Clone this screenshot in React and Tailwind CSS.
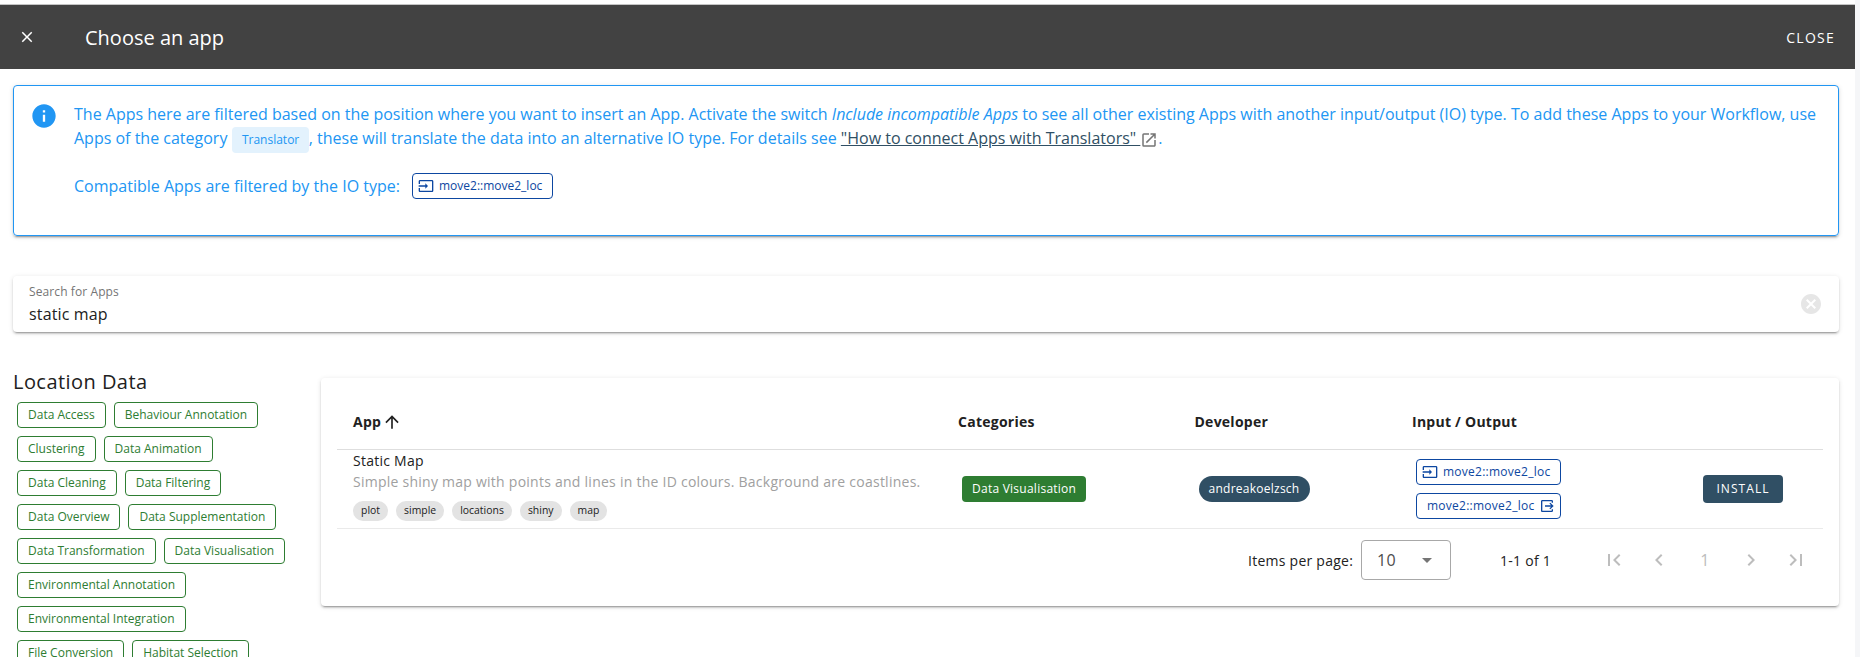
import { MdInfo, MdInput, MdOutput, MdOpenInNew, MdArrowUpward, MdClose, MdCancel, MdArrowDropDown, MdFirstPage, MdLastPage, MdChevronLeft, MdChevronRight } from "react-icons/md";

const categoryRows = [
  ["Data Access", "Behaviour Annotation"],
  ["Clustering", "Data Animation"],
  ["Data Cleaning", "Data Filtering"],
  ["Data Overview", "Data Supplementation"],
  ["Data Transformation", "Data Visualisation"],
  ["Environmental Annotation"],
  ["Environmental Integration"],
  ["File Conversion", "Habitat Selection"],
];
const tags = ["plot", "simple", "locations", "shiny", "map"];
const elevation =
  "shadow-[0_3px_1px_-2px_rgba(0,0,0,0.2),0_2px_2px_0_rgba(0,0,0,0.14),0_1px_5px_0_rgba(0,0,0,0.12)]";

function Header() {
  return (
    <header className="mt-1 flex h-[65px] shrink-0 items-center border-t border-[#c4c4c4] bg-[#424242] text-white">
      <MdClose className="ml-[18px] size-[18px]" />
      <h1 className="mt-0.5 ml-[49px] text-[20px] leading-8">Choose an app</h1>
      <button className="mr-5 ml-auto text-[14px] tracking-[1.25px]">CLOSE</button>
    </header>
  );
}

function Notice() {
  return (
    <section className={`flex h-[151px] shrink-0 rounded border border-[#2196f3] p-4 text-[#2196f3] ${elevation}`}>
      <MdInfo className="mr-4 size-7 shrink-0" />
      <div className="text-[16px] leading-6 whitespace-nowrap">
        <p>
          The Apps here are filtered based on the position where you want to insert an App. Activate the switch{" "}
          <em>Include incompatible Apps</em> to see all other existing Apps with another input/output (IO) type. To add these Apps to your Workflow, use
        </p>
        <p className="flex h-6 items-center">
          <span>Apps of the category</span>
          <span className="mt-[3px] ml-[5px] flex h-[26px] items-center rounded bg-[#e3f2fd] px-[9.5px] text-[12px]">Translator</span>
          <span className="whitespace-pre">, these will translate the data into an alternative IO type. For details see </span>
          <a className="whitespace-pre text-[#304f64] underline">"How to connect Apps with Translators" </a>
          <MdOpenInNew className="mt-[3px] size-[18px] text-[#757575]" />
          <span>.</span>
        </p>
        <p className="mt-6 flex h-6 items-center">
          <span>Compatible Apps are filtered by the IO type:</span>
          <span className="ml-3 flex h-[26px] items-center gap-[5px] rounded border border-[#0d47a1] pr-2.5 pl-[5px] text-[12px] text-[#0d47a1]">
            <MdInput className="size-4" />
            move2::move2_loc
          </span>
        </p>
      </div>
    </section>
  );
}

function Search() {
  return (
    <section className={`mt-10 flex h-14 shrink-0 items-center justify-between rounded pr-4 pl-4 ${elevation}`}>
      <div>
        <div className="text-[12px] leading-5 tracking-[0.1px] text-[#757575]">Search for Apps</div>
        <div className="text-[16px] leading-6 tracking-[0.15px] text-[#212121]">static map</div>
      </div>
      <MdCancel className="size-6 text-[#e6e6e6]" />
    </section>
  );
}

function Sidebar() {
  return (
    <aside className="w-[308px] shrink-0">
      <h2 className="text-[20px] leading-8 tracking-[0.45px] text-[#212121]">Location Data</h2>
      <div className="mt-1 ml-1 flex flex-col gap-2">
        {categoryRows.map((row) => (
          <div key={row[0]} className="flex gap-2">
            {row.map((name) => (
              <span key={name} className="flex h-[26px] items-center rounded border border-[#2e7d32] px-2.5 text-[12px] whitespace-nowrap text-[#2e7d32]">
                {name}
              </span>
            ))}
          </div>
        ))}
      </div>
    </aside>
  );
}

function AppTable() {
  const columns = "grid grid-cols-[605px_236.5px_217.5px_1fr_144px]";
  return (
    <section className={`mt-3 h-[228px] w-[1518px] shrink-0 rounded p-4 text-[14px] tracking-[0.25px] text-[#212121] ${elevation}`}>
      <div className={`${columns} h-14 items-center border-b border-[#dedede] font-bold`}>
        <div className="flex items-center pl-4">
          App
          <MdArrowUpward className="ml-px size-5" />
        </div>
        <div className="pl-4">Categories</div>
        <div className="pl-4">Developer</div>
        <div className="pl-4">Input / Output</div>
      </div>
      <div className={`${columns} h-[79px] items-center border-b border-[#eaeaea]`}>
        <div className="-mt-[7px] pl-4">
          <div className="leading-5">Static Map</div>
          <div className="leading-[22px] text-[#a0a0a0]">Simple shiny map with points and lines in the ID colours. Background are coastlines.</div>
          <div className="mt-2 flex gap-2">
            {tags.map((tag) => (
              <span key={tag} className="flex h-5 items-center rounded-full bg-[#e3e3e3] px-2 text-[10.4px] tracking-[0.02px]">{tag}</span>
            ))}
          </div>
        </div>
        <div className="pl-5">
          <span className="flex h-[26px] w-fit items-center rounded bg-[#2e7d32] px-2.5 text-[12px] text-white">Data Visualisation</span>
        </div>
        <div className="pl-5">
          <span className="flex h-[26px] w-[111px] items-center justify-center rounded-full bg-[#304f64] text-[12px] text-white">andreakoelzsch</span>
        </div>
        <div className="flex flex-col gap-2 pl-5 text-[12px] text-[#0d47a1]">
          <span className="flex h-[26px] w-[145px] items-center gap-[5px] rounded border border-[#0d47a1] pl-[5px]">
            <MdInput className="size-4" />
            move2::move2_loc
          </span>
          <span className="flex h-[26px] w-[145px] items-center justify-between rounded border border-[#0d47a1] pr-[5px] pl-2.5">
            move2::move2_loc
            <MdOutput className="size-4" />
          </span>
        </div>
        <button className="ml-[24px] h-7 w-20 rounded bg-[#304f64] text-[12px] tracking-[1.07px] text-white">INSTALL</button>
      </div>
      <footer className="flex h-[62px] items-center justify-end">
        <span className="mr-2">Items per page:</span>
        <div className="mr-[49px] flex h-10 w-[90px] items-center justify-between rounded border border-[#a8a8a8] pr-[11px] pl-[15px] text-[16px] text-[#4d4d4d]">
          10
          <MdArrowDropDown className="size-6 text-[#757575]" />
        </div>
        <span>1-1 of 1</span>
        <nav className="mr-1 ml-10 flex items-center text-[#bdbdbd]">
          <span className="flex w-[45.6px] justify-center"><MdFirstPage className="size-6" /></span>
          <span className="flex w-[45.6px] justify-center"><MdChevronLeft className="size-6" /></span>
          <span className="flex w-[45.6px] justify-center text-[16px]">1</span>
          <span className="flex w-[45.6px] justify-center"><MdChevronRight className="size-6" /></span>
          <span className="flex w-[45.6px] justify-center"><MdLastPage className="size-6" /></span>
        </nav>
      </footer>
    </section>
  );
}

export default function App() {
  return (
    <div className="flex h-[657px] w-[1860px] overflow-hidden bg-[#f5f6f8] font-['Open_Sans','Noto_Sans',sans-serif]">
      <div className="flex w-[1855px] flex-col bg-white">
        <Header />
        <main className="flex flex-col pt-4 pr-4 pl-[13px]">
          <Notice />
          <Search />
          <div className="mt-[34px] flex items-start">
            <Sidebar />
            <AppTable />
          </div>
        </main>
      </div>
    </div>
  );
}
